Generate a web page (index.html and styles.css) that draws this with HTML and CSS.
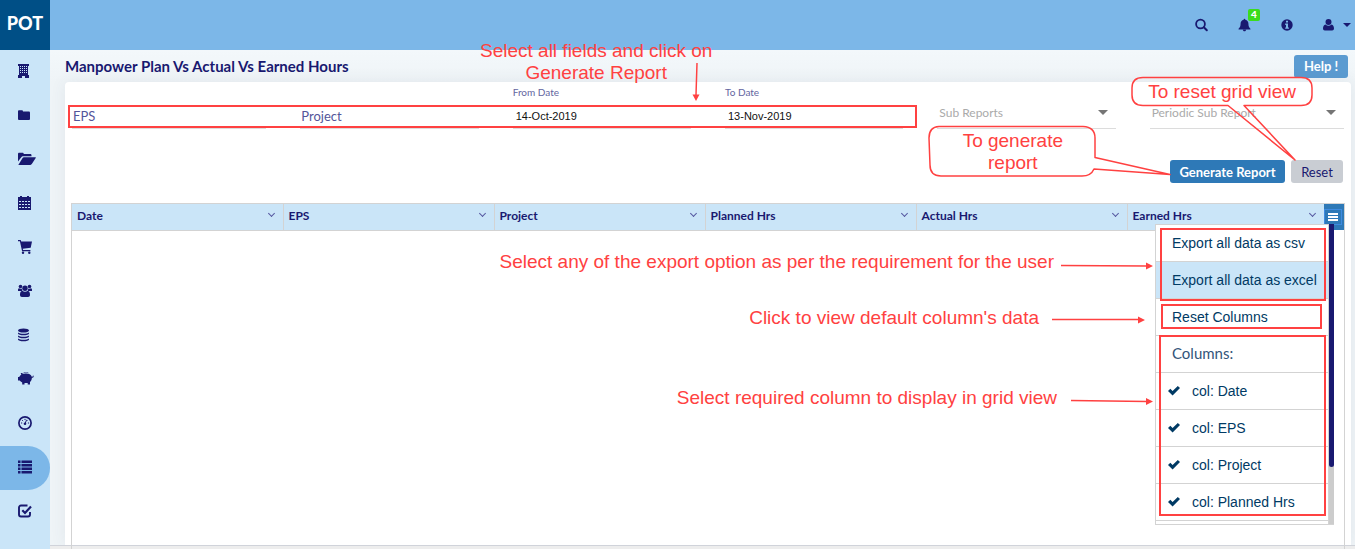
FILE: index.html
```html
<!DOCTYPE html>
<html lang="en">
<head>
<meta charset="utf-8">
<title>Manpower Plan Vs Actual Vs Earned Hours</title>
<link rel="stylesheet" href="styles.css">
</head>
<body>
<header class="topbar">
  <a class="brand" href="#">POT</a>
  <div class="topbar-actions">
    <button class="icon-btn" aria-label="Search"><svg width="13" height="14" viewBox="0 0 13 14"><circle cx="5.500" cy="6" r="4.400" fill="none" stroke="currentColor" stroke-width="1.800"/><path d="M8.800 9.300l3 3" stroke="currentColor" stroke-width="2" stroke-linecap="round"/></svg></button>
    <button class="icon-btn bell" aria-label="Notifications"><svg width="13" height="14" viewBox="0 0 14 14"><path d="M7 .3c.6 0 .9.4.9 1 2.200.5 3.300 2.200 3.300 4.200 0 3 .8 4.300 2.200 5.500v.8H.6V11C2 9.800 2.800 8.500 2.800 5.500c0-2 1.100-3.700 3.300-4.200 0-.6.300-1 .9-1zM5.200 12.200h3.600C8.700 13.200 8 13.800 7 13.800s-1.700-.6-1.800-1.600z" fill="currentColor"/></svg><span class="badge">4</span></button>
    <button class="icon-btn" aria-label="Information"><svg width="12" height="12" viewBox="0 0 12 12"><circle cx="6" cy="6" r="5.700" fill="currentColor"/><path d="M5 1.800h2v1.700H5zM4.200 4.600H7v3.800h.9v1.300H4.200V8.400H5V5.900h-.8z" fill="#7cb7e8"/></svg></button>
    <button class="icon-btn user" aria-label="Account"><svg width="11" height="12" viewBox="0 0 11 12"><path d="M5.500 0a2.900 2.900 0 0 1 0 6 2.900 2.900 0 0 1 0-6zM2.600 5.400a4 4 0 0 0 5.800 0C10.300 5.600 11 7.600 11 9.600c0 1.300-.8 2-1.800 2H1.800c-1 0-1.800-.7-1.800-2 0-2 .7-4 2.600-4.200z" fill="currentColor"/></svg><span class="caret"></span></button>
  </div>
</header>

<div class="shell">
  <nav class="sidebar" aria-label="Main">
    <a href="#" aria-label="Company"><svg width="14" height="14" viewBox="0 0 14 14"><path d="M0 0h11v2h-1v9h1v3H7v-2H4v2H0v-3h1V2H0z" fill="currentColor"/><path d="M2 2h1v1H2zM4 2h1v1H4zM6 2h1v1H6zM8 2h1v1H8zM2 4h1v1H2zM4 4h1v1H4zM6 4h1v1H6zM8 4h1v1H8zM2 6h1v1H2zM4 6h1v1H4zM6 6h1v1H6zM8 6h1v1H8zM2 8h1v1H2zM4 8h1v1H4zM6 8h1v1H6zM8 8h1v1H8z" fill="#cae5f8"/></svg></a>
    <a href="#" aria-label="Folder"><svg width="14" height="14" viewBox="0 0 14 14"><path d="M0 3.500c0-.8.500-1.200 1.200-1.200h2.500C4.500 2.300 5 2.800 5 3.600h5.700c.8 0 1.300.5 1.300 1.300v5.800c0 .8-.5 1.300-1.300 1.300H1.300C.5 12 0 11.500 0 10.700z" fill="currentColor"/></svg></a>
    <a href="#" aria-label="Projects"><svg width="18" height="14" viewBox="0 0 18 14"><path d="M0 9.500V2C0 1.200.5.700 1.200.700h3.300c.8 0 1.300.6 1.300 1.300h6.400c.8 0 1.300.5 1.300 1.200v1H5.300c-1 0-1.700.5-2.200 1.200zM.300 12.900l4.300-6.800c.3-.5.700-.8 1.300-.8h11.300c.6 0 .8.300.5.800l-3.900 6c-.3.500-.8.800-1.400.8z" fill="currentColor"/></svg></a>
    <a href="#" aria-label="Calendar"><svg width="14" height="14" viewBox="0 0 14 14"><path d="M0 1h2V0h2v1h5V0h2v1h2v13H0z" fill="currentColor"/><path d="M1 5.500h11M1 8.500h11M1 11.500h11" stroke="#cae5f8" stroke-width="1" stroke-dasharray="2 1"/></svg></a>
    <a href="#" aria-label="Procurement"><svg width="14" height="14" viewBox="0 0 14 14"><path d="M0 0h2.700l.5 1.500H14l-1.300 6.300-8 .9.400 1.300h7.300v1.200H4.100L1.900 1.200H0z" fill="currentColor"/><circle cx="5" cy="12.800" r="1.200" fill="currentColor"/><circle cx="11.300" cy="12.800" r="1.200" fill="currentColor"/></svg></a>
    <a href="#" aria-label="People"><svg width="14" height="14" viewBox="0 0 14 14"><g fill="currentColor"><circle cx="2.500" cy="2.500" r="1.800"/><circle cx="11.500" cy="2.500" r="1.800"/><circle cx="7" cy="4.300" r="2.700"/><path d="M0 7V5.800c0-1 .6-1.500 1.300-1.500.7.700 1.700.7 2.500.3 0 1 .2 1.700.7 2.400zM14 7V5.800c0-1-.6-1.500-1.300-1.500-.7.700-1.700.7-2.500.3 0 1-.2 1.700-.7 2.400zM4.300 6.700c1.600 1.400 3.800 1.400 5.400 0 1.600.3 2.300 1.800 2.300 4.300 0 1.300-.8 2-1.900 2H3.900c-1.100 0-1.900-.7-1.900-2 0-2.500.7-4 2.300-4.300z"/></g></svg></a>
    <a href="#" aria-label="Data"><svg width="14" height="14" viewBox="0 0 14 14"><g fill="currentColor"><ellipse cx="5.500" cy="2.500" rx="5.500" ry="2"/><path d="M0 4.400c2 1.700 9 1.700 11 0v1.100c0 2.400-11 2.400-11 0zM0 7.400c2 1.700 9 1.700 11 0v1.100c0 2.400-11 2.400-11 0zM0 10.400c2 1.700 9 1.700 11 0v1.100c0 2.400-11 2.400-11 0z"/></g></svg></a>
    <a href="#" aria-label="Savings"><svg width="16" height="14" viewBox="0 0 16 14"><path d="M0 5h1.200C1.800 3.800 2.800 3 3.300 2.700L2.700 1c1.400 0 2.200.5 2.800 1 3-1 7.300-.5 8.300 2.800l1.300-.5-.3-1.500.9 1.500c0 1-.8 1.500-1.800 1.500 0 2-.8 3.300-1.900 4.200v2.600h-2.300V11H6.500v1.600H4.200V10.500C3 9.900 2.200 9.200 1.700 8.500H0z" fill="currentColor"/><path d="M5.500 1c1-1.300 4-1.300 4.800-.2" stroke="currentColor" fill="none" stroke-width=".8"/></svg></a>
    <a href="#" aria-label="Dashboard"><svg width="14" height="14" viewBox="0 0 14 14"><circle cx="7" cy="7" r="6.100" fill="none" stroke="currentColor" stroke-width="1.700"/><path d="M7 7.800l1.600-4" stroke="currentColor" stroke-width="1"/><circle cx="7" cy="7.800" r="1.300" fill="currentColor"/><path d="M3 7h1.200M9.900 7h1.200M4.200 4.200l.9.900M7 2.800V4M9.800 4.200l-.5.500" stroke="currentColor"/></svg></a>
    <a href="#" class="active" aria-label="Reports" aria-current="page"><svg width="14" height="14" viewBox="0 0 14 14"><path d="M0 .500h2.500V3H0zM0 4h2.500v2.500H0zM0 7.500h2.500V10H0zM0 11h2.500v2.500H0zM3.500.500H14V3H3.500zM3.500 4H14v2.500H3.500zM3.500 7.500H14V10H3.500zM3.500 11H14v2.500H3.500z" fill="currentColor"/></svg></a>
    <a href="#" aria-label="Tasks"><svg width="14" height="14" viewBox="0 0 14 14"><path d="M9.500 1.500H3A2 2 0 0 0 1 3.500v7a2 2 0 0 0 2 2h7a2 2 0 0 0 2-2V8" fill="none" stroke="currentColor" stroke-width="1.900"/><path d="M4.300 6.300L7 9l6-6.500" fill="none" stroke="currentColor" stroke-width="2.200"/></svg></a>
  </nav>

  <main class="page">
    <div class="page-head">
      <h1>Manpower Plan Vs Actual Vs Earned Hours</h1>
      <button class="btn help">Help !</button>
    </div>

    <section class="card">
      <form class="filters">
        <div class="field"><input class="line-input" id="eps" aria-label="EPS" placeholder="EPS"></div>
        <div class="field"><input class="line-input" id="project" aria-label="Project" placeholder="Project"></div>
        <div class="field"><label for="from">From Date</label><input class="line-input date" id="from" value="14-Oct-2019"></div>
        <div class="field"><label for="to">To Date</label><input class="line-input date" id="to" value="13-Nov-2019"></div>
        <div class="field pick"><select aria-label="Sub Reports"><option>Sub Reports</option></select></div>
        <div class="field pick"><select aria-label="Periodic Sub Report"><option>Periodic Sub Report</option></select></div>
      </form>
      <div class="actions">
        <button class="btn primary">Generate Report</button>
        <button class="btn muted">Reset</button>
      </div>

      <div class="grid">
        <table>
          <thead>
            <tr>
              <th><div class="th">Date<button class="chev" aria-label="Date options"></button></div></th>
              <th><div class="th">EPS<button class="chev" aria-label="EPS options"></button></div></th>
              <th><div class="th">Project<button class="chev" aria-label="Project options"></button></div></th>
              <th><div class="th">Planned Hrs<button class="chev" aria-label="Planned Hrs options"></button></div></th>
              <th><div class="th">Actual Hrs<button class="chev" aria-label="Actual Hrs options"></button></div></th>
              <th class="last"><div class="th">Earned Hrs<button class="chev" aria-label="Earned Hrs options"></button></div></th>
            </tr>
          </thead>
        </table>
        <button class="grid-menu-btn" aria-label="Grid menu"><span class="bars"></span></button>

        <div class="menu">
          <div class="menu-list">
            <button class="menu-item">Export all data as csv</button>
            <button class="menu-item hover">Export all data as excel</button>
            <button class="menu-item">Reset Columns</button>
            <div class="menu-item heading">Columns:</div>
            <label class="menu-item"><input type="checkbox" class="tick" checked>col: Date</label>
            <label class="menu-item"><input type="checkbox" class="tick" checked>col: EPS</label>
            <label class="menu-item"><input type="checkbox" class="tick" checked>col: Project</label>
            <label class="menu-item"><input type="checkbox" class="tick" checked>col: Planned Hrs</label>
          </div>
          <div class="scrollbar"><div class="thumb"></div></div>
          <div class="mark mark-export"></div>
          <div class="mark mark-reset"></div>
          <div class="mark mark-columns"></div>
        </div>
      </div>
    </section>
  </main>
</div>
<footer class="footer"></footer>

<div class="mark mark-fields"></div>
<p class="note note-fields">Select all fields and click on<br>Generate Report</p>
<p class="note note-export">Select any of the export option as per the requirement for the user</p>
<p class="note note-default">Click to view default column's data</p>
<p class="note note-columns">Select required column to display in grid view</p>
<svg class="callouts" width="455" height="420" viewBox="900 0 455 420">
  <path d="M1143 77.500H1301Q1312 77.500 1312 88V95Q1312 105.500 1301 105.500H1244L1295 160L1228 105.500H1143Q1132 105.500 1132 95V88Q1132 77.500 1143 77.500Z" class="bubble"/>
  <path d="M939 126.500H1083Q1095 127 1095 138V157.500L1170 174.500L1094 169Q1091 176 1082 176H941Q930 176 930 165L929 138Q929 127 939 126.500Z" class="bubble"/>
  <g class="arrow">
    <path d="M1061 265.500L1147 266M1052 319.500H1139M1071 400.500L1147 401.500"/>
    <path class="head" d="M1146 262.500L1153 266L1146 269.500ZM1138 316.500L1145 320L1138 323.500ZM1146 398L1153 401.500L1146 405Z"/>
  </g>
</svg>
<svg class="fields-arrow" width="10" height="40" viewBox="0 0 10 40"><g class="arrow"><path d="M6 1L5 33"/><path class="head" d="M1.500 32.500H8.500L5 39Z"/></g></svg>
<p class="note note-reset">To reset grid view</p>
<p class="note note-generate">To generate<br>report</p>
</body>
</html>
```
FILE: styles.css
```css
:root {
  --navy: #191970;
  --sky: #7cb7e8;
  --pale: #cae5f8;
  --blue: #2e79b7;
  --red: #ff4141;
  --rule: #d3d3d3;
}

* { box-sizing: border-box; }

body {
  margin: 0;
  min-height: 100vh;
  display: flex;
  flex-direction: column;
  position: relative;
  overflow: hidden;
  font-family: Lato, "Liberation Sans", sans-serif;
  font-size: 13px;
  color: var(--navy);
  background: #ebf1f4;
}

button, input, select { font: inherit; color: inherit; margin: 0; }
button { border: 0; padding: 0; background: none; }
svg { display: block; }

.topbar {
  height: 50px;
  display: flex;
  justify-content: space-between;
  background: var(--sky);
}
.brand {
  width: 50px;
  display: flex;
  align-items: center;
  justify-content: center;
  padding-bottom: 4px;
  background: #004f86;
  color: #fff;
  font-size: 18px;
  font-weight: 900;
  text-decoration: none;
}
.topbar-actions {
  display: flex;
  align-items: center;
  gap: 30px;
  padding-right: 4px;
}
.icon-btn { position: relative; display: flex; align-items: center; }
.user { gap: 9px; }
.caret {
  border: 4px solid transparent;
  border-top-color: var(--navy);
  border-bottom: 0;
}
.badge {
  position: absolute;
  left: 10px;
  top: -9px;
  width: 12px;
  height: 12px;
  border-radius: 2px;
  background: #3bdc1c;
  color: #fff;
  font-size: 10px;
  font-weight: 900;
  line-height: 11px;
  text-align: center;
}

.shell { flex: 1; display: flex; }
.sidebar { width: 50px; background: var(--pale); margin-bottom: -4px; }
.sidebar a {
  height: 44px;
  display: flex;
  align-items: center;
  padding: 0 0 2px 18px;
  color: var(--navy);
}
.sidebar .active { background: var(--sky); border-radius: 0 22px 22px 0; }

.page {
  flex: 1;
  min-width: 0;
  display: flex;
  flex-direction: column;
  padding: 0 4px 0 15px;
  background: linear-gradient(#f3f8fb, #eff4f7 32px);
}
.page-head {
  height: 32px;
  display: flex;
  align-items: center;
  justify-content: space-between;
  padding-right: 3px;
}
h1 { margin: 0; font-size: 15px; font-weight: 700; }

.btn {
  height: 23px;
  border-radius: 3px;
  font-weight: 700;
  font-size: 13px;
  white-space: nowrap;
}
.help { width: 54px; background: #5b9bd1; color: #fff; }
.primary { width: 115px; background: var(--blue); color: #fff; }
.muted { width: 52px; background: #c9cdd3; font-weight: 400; }

.card {
  flex: 1;
  display: flex;
  flex-direction: column;
  padding: 0 6px;
  background: #fff;
  border-radius: 4px 4px 0 0;
  box-shadow: 0 0 16px rgba(60, 80, 100, .08);
}
.filters {
  display: grid;
  grid-template-columns: 194fr 178fr 178fr 178fr 178fr 194fr;
  gap: 34px;
  padding: 0 1px;
}
.field {
  min-width: 0;
  height: 47px;
  display: flex;
  flex-direction: column;
  justify-content: flex-end;
  border-bottom: 1px solid #dcdcdc;
}
.field label { font-size: 10px; line-height: 12px; color: #6365a0; }
.line-input {
  width: 100%;
  height: 24px;
  padding: 0 1px;
  border: 0;
  background: transparent;
}
.line-input::placeholder { color: #53559a; opacity: 1; }
.date { padding: 0 3px; font: 11px "Liberation Sans", sans-serif; color: #111; height: 25px; margin-top: 5px; }
.pick { position: relative; }
.pick select {
  appearance: none;
  width: 100%;
  height: 32px;
  padding: 0 2px;
  border: 0;
  background: transparent;
  font-size: 12px;
  color: #aaa;
}
.pick::after {
  content: "";
  position: absolute;
  right: 8px;
  bottom: 13px;
  border: 5px solid transparent;
  border-top-color: #757575;
  border-bottom: 0;
}

.actions {
  display: flex;
  justify-content: flex-end;
  gap: 6px;
  padding: 31px 2px 20px;
}

.grid {
  flex: 1;
  position: relative;
  display: flex;
  align-items: flex-start;
  border: 1px solid var(--rule);
  border-bottom: 0;
  margin-bottom: -4px;
}
table { flex: 1; width: 100%; border-collapse: collapse; table-layout: fixed; }
th {
  height: 26px;
  width: 211px;
  padding: 0 0 2px 5px;
  background: var(--pale);
  border-right: 1px solid var(--rule);
  border-bottom: 1px solid var(--rule);
  font-size: 12px;
  text-align: left;
}
th.last { width: auto; border-right: 0; }
.th { display: flex; align-items: center; justify-content: space-between; }
.chev { width: 22px; height: 14px; }
.chev::before {
  content: "";
  display: block;
  width: 4px;
  height: 4px;
  margin: 0 8px 5px;
  border: solid #5658a0;
  border-width: 0 1px 1px 0;
  transform: rotate(45deg);
}
.grid-menu-btn {
  width: 20px;
  height: 26px;
  display: flex;
  align-items: center;
  justify-content: center;
  padding-right: 2px;
  background: var(--blue);
}
.bars {
  width: 18px;
  height: 16px;
  border: 1px solid #3f8be0;
  background: linear-gradient(#fff 2px, transparent 2px 3px, #fff 3px 5px, transparent 5px 6px, #fff 6px) center / 10px 8px no-repeat;
}

.menu {
  position: absolute;
  top: 20px;
  right: 10px;
  width: 179px;
  height: 301px;
  display: flex;
  background: #fff;
  border: 1px solid var(--rule);
  border-right: 0;
  color: #003a64;
}
.menu-list { flex: 1; overflow: hidden; border-right: 1px solid var(--rule); }
.menu-item {
  width: 100%;
  height: 37px;
  display: flex;
  align-items: center;
  padding: 0 0 1px 16px;
  border-bottom: 1px solid var(--rule);
  font: 14px "Liberation Sans", sans-serif;
  white-space: nowrap;
}
.menu-item.hover { background: var(--pale); }
.menu-item.heading { font: 15px Lato, sans-serif; color: #33557a; padding-bottom: 3px; }
label.menu-item { padding-left: 11px; gap: 11px; }
.tick {
  appearance: none;
  width: 14px;
  height: 14px;
  background: #003a64;
  clip-path: path("M1 7.500L3.300 5.300L5.600 7.600L10.800 2.400L13 4.600L5.600 12Z");
}
.scrollbar { width: 5px; background: #ccc; margin-top: -1px; }
.thumb { height: 81%; background: var(--navy); border-radius: 0 0 3px 3px; }

.mark { position: absolute; border: 2px solid var(--red); pointer-events: none; }
.mark-export { left: 4px; top: 3px; width: 166px; height: 73px; }
.mark-reset { left: 5px; top: 79px; width: 161px; height: 25px; }
.mark-columns { left: 3px; top: 110px; width: 167px; height: 181px; }
.mark-fields { left: 68px; right: 438px; top: 105px; height: 23px; }

.footer { height: 4px; margin-left: 50px; border-top: 1px solid #d0d3da; background: #ededed; }

.note {
  position: absolute;
  margin: 0;
  font: 19px/22px "Liberation Sans", sans-serif;
  color: var(--red);
  text-align: center;
  white-space: nowrap;
}
.note-fields { left: 480px; top: 40px; }
.note-export { right: 301px; top: 251px; }
.note-default { right: 316px; top: 307px; }
.note-columns { right: 298px; top: 387px; }
.note-reset { right: 59px; top: 81px; }
.note-generate { right: 292px; top: 130px; }
.callouts { position: absolute; right: 0; top: 0; pointer-events: none; }
.fields-arrow { position: absolute; left: 691px; top: 62px; }
.bubble { fill: none; stroke: var(--red); stroke-width: 1.5; stroke-linejoin: round; }
.arrow path { fill: none; stroke: var(--red); stroke-width: 1.5; }
.arrow .head { fill: var(--red); stroke: none; }
```
